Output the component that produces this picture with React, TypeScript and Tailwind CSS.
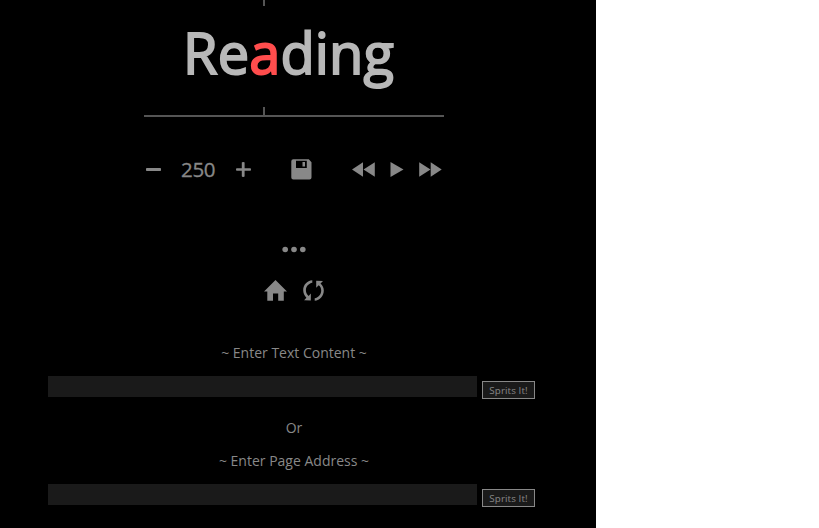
import type { ReactNode } from 'react';

function Icon({ className, viewBox, children }: { className: string; viewBox: string; children: ReactNode }) {
  return (
    <svg className={`block shrink-0 ${className}`} viewBox={viewBox} fill="#888">
      {children}
    </svg>
  );
}

function Reader() {
  return (
    <section className="ml-[144px] w-[300px]">
      <div className="ml-[119px] h-[6px] w-[2px] bg-[#555]" />
      <div className="h-[101px] pl-[39px] pt-[7px] whitespace-nowrap text-[56px] leading-[79px] tracking-[0.1px] text-[#b8b8b8] [-webkit-text-stroke:1.9px]">
        Re<span className="text-[#ff4d4d]">a</span>ding
      </div>
      <div className="ml-[119px] h-[8px] w-[2px] bg-[#555]" />
      <div className="h-[2px] bg-[#555]" />
    </section>
  );
}

function Controls() {
  return (
    <div className="ml-[146px] mt-[41px] flex h-[24px] items-start">
      <Icon className="mt-[10px] h-[3px] w-[15px]" viewBox="0 0 15 3">
        <rect width="15" height="3" rx="0.8" />
      </Icon>
      <div className="ml-[20px] w-[35px] text-[20.5px] leading-[22px] tracking-[-0.3px] text-[#888] [-webkit-text-stroke:0.3px]">250</div>
      <Icon className="ml-[20px] mt-[4px] h-[15px] w-[15px]" viewBox="0 0 15 15">
        <path d="M5.800 .5Q5.800 0 7.200 0T8.600 .5V6.200h5.600q.8 0 .8 1.300T14.200 8.800H8.600v5.400q0 .8-1.400.8T5.800 14.200V8.800H.8Q0 8.800 0 7.500T.8 6.200H5.800z" />
      </Icon>
      <Icon className="ml-[40px] mt-px h-[21px] w-[21px]" viewBox="0 0 21 21">
        <path fillRule="evenodd" d="M2.300 .300h15.500l2.700 3v15.200q0 2-2 2H2.300q-2 0-2-2V2.300Q.300.300 2.300.300zM5 1.800v7.200h10.800V1.800zM11.500 3h2.500v4.500h-2.500z" />
      </Icon>
      <Icon className="ml-[40px] mt-[4px] h-[15px] w-[23px]" viewBox="0 0 23 15">
        <path d="M0 7.500 11 .300v14.400zM11.500 7.500 22.800 .300v14.400z" />
      </Icon>
      <Icon className="ml-[15px] mt-[4px] h-[15px] w-[14px]" viewBox="0 0 14 15">
        <path d="M.5 0 13.500 7.500.500 15z" />
      </Icon>
      <Icon className="ml-[15px] mt-[4px] h-[15px] w-[23px]" viewBox="0 0 23 15">
        <path d="M.2 .300 11.500 7.500 .2 14.700zM11.700 .300 22.700 7.500 11.700 14.700z" />
      </Icon>
    </div>
  );
}

function InputRow() {
  return (
    <div className="ml-[48px] flex h-[23px] items-start gap-[5px]">
      <input className="h-[21px] w-[429px] bg-[#1a1a1a] text-[#888] outline-none" />
      <button className="mt-[5px] h-[18px] w-[53px] border border-[#888] bg-[#1a1a1a] pt-px text-center text-[9.8px] leading-[15px] tracking-[0.1px] whitespace-nowrap text-[#888]">
        Sprits It!
      </button>
    </div>
  );
}

export default function App() {
  return (
    <div className="h-[528px] w-[819px] overflow-hidden bg-white">
      <main className="flex h-[528px] w-[596px] flex-col bg-black font-['Open_Sans',sans-serif] text-[14px] leading-[20px] text-[#888]">
        <Reader />
        <Controls />
        <Icon className="ml-[282px] mt-[64px] h-[7px] w-[24px]" viewBox="0 0 24 7">
          <circle cx="3.200" cy="3.500" r="2.800" />
          <circle cx="12" cy="3.500" r="2.800" />
          <circle cx="20.800" cy="3.500" r="2.800" />
        </Icon>
        <div className="ml-[264px] mt-[27px] flex h-[22px] gap-[16px]">
          <Icon className="h-[22px] w-[23px]" viewBox="0 0 23 22">
            <path d="M11.500 0 23 11.500h-3.200V20.700h-5.600v-7.200H9v7.200H3.300V11.500H0z" />
          </Icon>
          <Icon className="h-[22px] w-[21px]" viewBox="0 0 21 22">
            <path d="M9.300 .300C4 .700.200 5 .200 10.300c0 2.900 1.200 5.500 3.200 7.400L1.100 20.200l6.700.200.100-6.800-2.300 2.300C4 14.500 2.900 12.500 2.900 10.200 2.900 6.500 5.700 3.500 9.300 2.800z" />
            <path d="M13.200.800l6.800.100-2.500 2.500c2.100 1.900 3.300 4.300 3.300 7.100 0 5.300-3.900 9.700-9.100 10.300v-2.500c3.800-.7 6.500-3.900 6.500-7.800 0-2.100-.8-4-2.500-5.300L13.200 7.700z" />
          </Icon>
        </div>
        <p className="mt-[41px] w-[588px] text-center">~ Enter Text Content ~</p>
        <div className="mt-[13px]"><InputRow /></div>
        <p className="mt-[19px] w-[588px] text-center">Or</p>
        <p className="mt-[13px] w-[588px] text-center">~ Enter Page Address ~</p>
        <div className="mt-[13px]"><InputRow /></div>
      </main>
    </div>
  );
}
